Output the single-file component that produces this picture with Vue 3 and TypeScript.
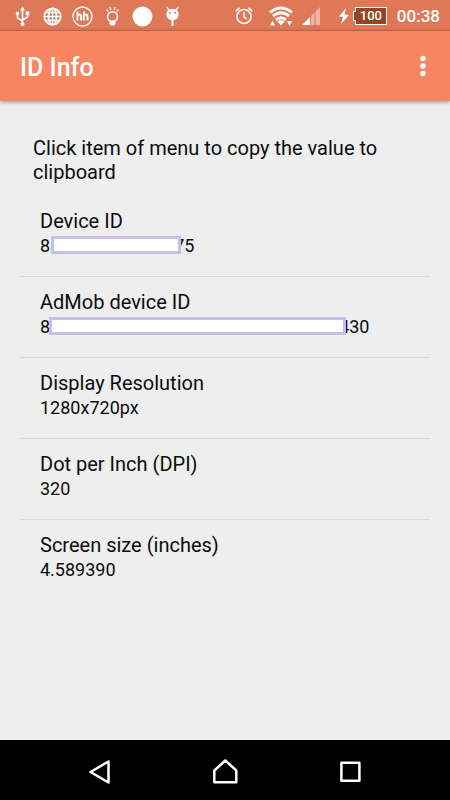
<script setup lang="ts">
interface InfoItem {
  label: string
  value: string
  mask?: 'short' | 'long'
  tail?: string
}

const hint = 'Click item of menu to copy the value to clipboard'

const items: InfoItem[] = [
  { label: 'Device ID', value: '8', mask: 'short', tail: '75' },
  { label: 'AdMob device ID', value: '8', mask: 'long', tail: '430' },
  { label: 'Display Resolution', value: '1280x720px' },
  { label: 'Dot per Inch (DPI)', value: '320' },
  { label: 'Screen size (inches)', value: '4.589390' },
]

function copyValue(item: InfoItem): void {
  navigator.clipboard?.writeText(item.value).catch(() => undefined)
}
</script>

<template>
  <div class="screen">
    <div class="status">
      <div class="notifications">
        <!-- USB -->
        <svg class="note" viewBox="0 0 21 21" fill="none" stroke="#fff" stroke-width="1.600">
          <path d="M10.500 4V18M10.500 15L5.500 12V9M10.500 14L15.500 11V8.500" />
          <path d="M10.500 0.500L13 4.500H8Z" fill="#fff" stroke="none" />
          <circle cx="10.500" cy="18" r="2" fill="#fff" stroke="none" />
          <circle cx="5.500" cy="7.500" r="1.800" fill="#fff" stroke="none" />
          <path d="M13.700 5.500h3.600v3.500h-3.600z" fill="#fff" stroke="none" />
        </svg>
        <!-- Globe -->
        <svg class="note" viewBox="0 0 21 21" fill="none" stroke="#fff" stroke-width="1.700">
          <circle cx="10.500" cy="10.500" r="8.200" />
          <ellipse cx="10.500" cy="10.500" rx="4" ry="8.200" />
          <path d="M10.500 2.300V18.700M2.300 10.500H18.700M3.500 6.500H17.500M3.500 14.500H17.500" stroke-width="1.400" />
        </svg>
        <!-- hh -->
        <svg class="note" viewBox="0 0 21 21" fill="none" stroke="#fff">
          <circle cx="10.500" cy="10.500" r="9.500" stroke-width="1.400" />
          <path d="M5.500 5.500V14.500M5.500 10.500Q5.500 8.500 7.300 8.500T9.100 10.500V14.500M11.900 5.500V14.500M11.900 10.500Q11.900 8.500 13.700 8.500T15.500 10.500V14.500" stroke-width="1.900" />
        </svg>
        <!-- Light bulb -->
        <svg class="note" viewBox="0 0 21 21" fill="none" stroke="#fff" stroke-width="1.500">
          <circle cx="10.500" cy="10.800" r="5" />
          <path d="M7.500 14.500H13.500V18L12 19.500H9L7.500 18Z" fill="#fff" stroke="none" />
          <path d="M4.500 3.500L6.300 5.500M8 1L8.800 4M13 1L12.200 4M16.500 3.500L14.700 5.500" stroke-width="1.300" />
        </svg>
        <!-- Dot -->
        <svg class="note" viewBox="0 0 21 21"><circle cx="10.500" cy="10.500" r="10" fill="#fff" /></svg>
        <!-- Robot on a stick -->
        <svg class="note" viewBox="0 0 21 21" fill="#fff">
          <path d="M5 0.600L7.500 3.300Q10.500 2 13.500 3.300L16 0.600L16.700 1.200L14.800 4Q17 5.500 16.700 9Q16 14 10.500 14T4.300 9Q4 5.500 6.200 4L4.300 1.200Z" />
          <path d="M9.500 14h2v6h-2z" />
          <circle cx="7.800" cy="7" r="0.900" fill="#df7857" />
          <circle cx="13.200" cy="7" r="0.900" fill="#df7857" />
        </svg>
      </div>
      <div class="system">
        <svg class="alarm" viewBox="0 0 20 20" fill="none" stroke="#fff" stroke-width="1.700">
          <circle cx="10" cy="10.500" r="7" />
          <path d="M10 6V11L13 13" stroke-width="1.500" />
          <path d="M1.800 5L5.500 2M18.200 5L14.500 2" stroke-width="1.800" />
        </svg>
        <svg class="wifi" viewBox="0 0 24 22" fill="none" stroke="#fff" stroke-width="2.900">
          <path d="M1 7.500Q12 -1.500 23 7.500M4 11.200Q12 4.500 20 11.200M7 14.800Q12 10.500 17 14.800" />
          <path d="M8.500 16.500Q12 14 15.500 16.500L12 20.500Z" fill="#fff" stroke="none" />
          <path d="M1 20.500L3.500 15.500L6 20.500ZM18 16H23L20.500 21Z" fill="#fff" stroke="none" />
        </svg>
        <svg class="signal" viewBox="0 0 20 20" fill="#fff">
          <path d="M1 19L9 11V19Z" />
          <path d="M10 10L13.500 6.500V19H10ZM14.500 5.500L19 1V19H14.500Z" fill-opacity="0.450" />
        </svg>
        <svg class="bolt" viewBox="0 0 12 16" fill="#fff"><path d="M8 0L1 8.500L5 9L3 16L11 7L6.500 6.500Z" /></svg>
        <div class="battery">100</div>
        <time class="clock">00:38</time>
      </div>
    </div>

    <header class="bar">
      <h1 class="title">ID Info</h1>
      <button class="more" type="button" aria-label="More options">
        <svg viewBox="0 0 6 22" width="6" height="22" fill="#fff">
          <circle cx="3" cy="3.500" r="2.700" />
          <circle cx="3" cy="11" r="2.700" />
          <circle cx="3" cy="18.500" r="2.700" />
        </svg>
      </button>
    </header>

    <main class="content">
      <p class="hint">{{ hint }}</p>
      <ul class="list">
        <li v-for="item in items" :key="item.label" class="row">
          <button class="item" type="button" @click="copyValue(item)">
            <span class="label">{{ item.label }}</span>
            <span class="value">
              <span>{{ item.value }}</span>
              <span v-if="item.mask" class="mask" :class="item.mask"></span>
              <span v-if="item.tail" class="tail">{{ item.tail }}</span>
            </span>
          </button>
        </li>
      </ul>
    </main>

    <nav class="nav">
      <button class="key" type="button" aria-label="Back">
        <svg viewBox="0 0 28 28" width="28" height="28"><path d="M4.500 14L22.500 3.500V24.500Z" /></svg>
      </button>
      <button class="key" type="button" aria-label="Home">
        <svg viewBox="0 0 28 28" width="28" height="28"><path d="M3.300 24.300V12.500L14.300 2.500L25.300 12.500V24.300Z" /></svg>
      </button>
      <button class="key" type="button" aria-label="Recent apps">
        <svg viewBox="0 0 28 28" width="28" height="28"><path d="M5.400 4.700H23.400V22.700H5.400Z" /></svg>
      </button>
    </nav>
  </div>
</template>

<style>
body {
  margin: 0;
  background: #eee;
}
</style>

<style scoped>
.screen {
  display: flex;
  flex-direction: column;
  min-height: 100vh;
  background: #eee;
  color: #0c0c0c;
  font-family: Roboto, "Noto Sans", sans-serif;
}
button {
  padding: 0;
  border: 0;
  background: none;
  color: inherit;
  font: inherit;
}
svg {
  display: block;
  flex: none;
}
.status {
  display: flex;
  box-sizing: border-box;
  justify-content: space-between;
  height: 31px;
  padding: 2px 10px 0 12px;
  border-bottom: 1px solid #c96e50;
  background: #df7857;
}
.notifications,
.system {
  display: flex;
  align-items: center;
}
.notifications {
  gap: 9px;
}
.note {
  width: 21px;
  height: 21px;
}
.alarm {
  width: 20px;
  height: 20px;
  margin-right: 15px;
}
.wifi {
  width: 24px;
  height: 22px;
  margin-right: 8px;
}
.signal {
  width: 20px;
  height: 20px;
  margin-right: 17px;
}
.bolt {
  width: 12px;
  height: 16px;
  margin-right: 5px;
}
.battery {
  position: relative;
  box-sizing: border-box;
  width: 32px;
  height: 18px;
  margin-right: 10px;
  border: 1px solid #fff;
  background: #934524;
  color: #fff;
  font-size: 13px;
  font-weight: 500;
  line-height: 16px;
  text-align: center;
}
.battery::before {
  content: "";
  position: absolute;
  top: 3px;
  left: -3px;
  width: 2px;
  height: 8px;
  border: 1px solid #fff;
  border-right: 0;
  background: #934524;
}
.clock {
  color: #fff;
  font-size: 17px;
  font-weight: 500;
  line-height: 28px;
}
.bar {
  display: flex;
  align-items: center;
  justify-content: space-between;
  height: 70px;
  padding: 0 20px;
  background: #f68560;
  box-shadow: 0 1px 4px rgba(0, 0, 0, 0.4);
}
.title {
  margin: 4px 0 0;
  color: #fff;
  font-size: 25px;
  font-weight: 500;
  line-height: 32px;
}
.more {
  padding: 0 4px;
}
.content {
  flex: 1;
  padding: 35px 20px 20px;
}
.hint {
  margin: 0;
  padding: 0 13px;
  font-size: 20px;
  line-height: 24px;
}
.list {
  margin: 12px 0 0;
  padding: 0;
  list-style: none;
}
.row + .row {
  border-top: 1px solid #d9d9d9;
}
.item {
  display: block;
  width: 100%;
  height: 80px;
  padding: 0 20px 8px;
  text-align: left;
}
.label {
  display: block;
  font-size: 20px;
  line-height: 28px;
}
.value {
  display: flex;
  align-items: center;
  height: 22px;
  font-size: 18px;
  line-height: 22px;
}
.mask {
  position: relative;
  box-sizing: border-box;
  height: 18px;
  margin-bottom: 2px;
  border: 3px solid #c8bee8;
  background: #fff;
}
.short {
  width: 130px;
  margin-left: 1px;
}
.long {
  width: 297px;
  margin-left: -1px;
}
.tail {
  margin-left: -7px;
}
.nav {
  display: flex;
  justify-content: center;
  gap: 97px;
  height: 60px;
  background: #000;
}
.key {
  display: flex;
  align-items: center;
  padding-top: 3px;
}
.key svg {
  fill: none;
  stroke: #fff;
  stroke-width: 2.5;
  stroke-linejoin: round;
}
</style>
